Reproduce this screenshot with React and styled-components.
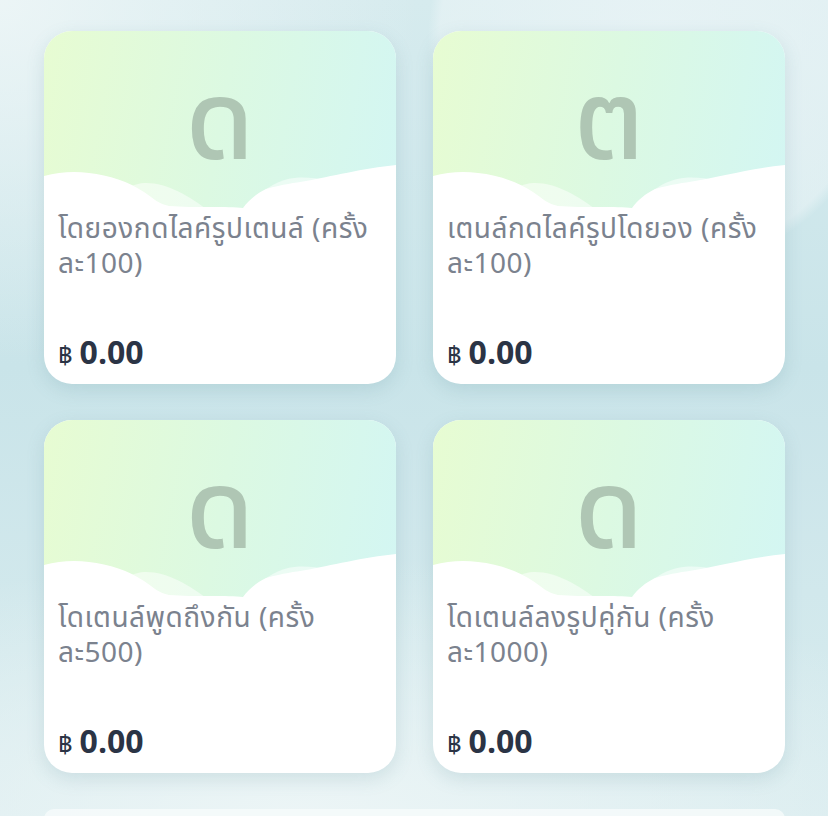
import React from "react";
import styled, { createGlobalStyle } from "styled-components";

const GlobalStyle = createGlobalStyle`
  html, body {
    margin: 0;
    padding: 0;
    height: 816px;
    overflow: hidden;
  }
  body {
    font-family: "Noto Sans Thai", "Noto Sans", "DejaVu Sans", sans-serif;
    background: #d3e9ed;
  }
`;

const items = [
  { letter: "ด", title: "โดยองกดไลค์รูปเตนล์ (ครั้ง\nละ100)", price: "0.00" },
  { letter: "ต", title: "เตนล์กดไลค์รูปโดยอง (ครั้ง\nละ100)", price: "0.00" },
  { letter: "ด", title: "โดเตนล์พูดถึงกัน (ครั้ง\nละ500)", price: "0.00" },
  { letter: "ด", title: "โดเตนล์ลงรูปคู่กัน (ครั้ง\nละ1000)", price: "0.00" },
];

const Page = styled.div`
  width: 828px;
  height: 816px;
  overflow: hidden;
  box-sizing: border-box;
  padding: 31px 43px 0 44px;
  background:
    radial-gradient(circle at 660px 40px, rgba(236, 245, 247, 0.75) 0, rgba(236, 245, 247, 0.55) 220px, rgba(236, 245, 247, 0) 232px),
    radial-gradient(ellipse 420px 360px at 0 0, rgba(238, 246, 247, 0.9), rgba(238, 246, 247, 0)),
    radial-gradient(ellipse 700px 260px at 300px 816px, rgba(236, 245, 246, 1), rgba(236, 245, 246, 0)),
    linear-gradient(180deg, #d6ebee 0%, #c9e4e9 45%, #d9ecef 100%);
`;

const Grid = styled.div`
  display: grid;
  grid-template-columns: 352px 352px;
  column-gap: 37px;
  row-gap: 36px;
`;

const Card = styled.div`
  height: 353px;
  border-radius: 28px;
  background: #ffffff;
  overflow: hidden;
  display: flex;
  flex-direction: column;
  box-shadow: 0 6px 18px rgba(90, 140, 150, 0.18);
`;

const Cover = styled.div`
  position: relative;
  height: 185px;
  flex: none;
  display: flex;
  justify-content: center;
  background: linear-gradient(100deg, #e7fcd2 0%, #dcf9e2 50%, #d3f6f3 100%);
`;

const Letter = styled.div`
  margin-top: 39px;
  font-size: 110px;
  line-height: 112px;
  font-weight: 500;
  color: #afc6b4;
`;

const Cloud = styled.svg`
  position: absolute;
  left: 0;
  bottom: 0;
  width: 352px;
  height: 60px;
`;

const Body = styled.div`
  position: relative;
  flex: 1;
  display: flex;
  flex-direction: column;
  justify-content: space-between;
  padding: 0 12px 6px 14px;
`;

const Title = styled.div`
  margin-top: -4px;
  font-size: 28px;
  line-height: 35px;
  letter-spacing: 0.5px;
  color: #7b828e;
  white-space: pre-line;
`;

const Price = styled.div`
  display: flex;
  align-items: baseline;
  gap: 7px;
  color: #2b3445;
`;

const Baht = styled.span`
  font-size: 25px;
`;

const Amount = styled.span`
  font-size: 32px;
  font-weight: 700;
`;

const Wide = styled.div`
  grid-column: 1 / 3;
  height: 10px;
  border-radius: 28px 28px 0 0;
  background: rgba(246, 250, 250, 0.85);
`;

const CloudShape = () => (
  <Cloud viewBox="0 0 352 60" preserveAspectRatio="none">
    <path
      d="M55 60 C68 40 84 28 100 27 C122 26 145 40 165 55 L165 60 Z"
      fill="#ffffff"
      opacity="0.5"
    />
    <path
      d="M200 60 C212 36 232 24 250 22 C270 20 288 25 305 32 L305 60 Z"
      fill="#ffffff"
      opacity="0.5"
    />
    <path
      d="M0 60 L0 20 C15 16 30 15 45 17 C65 19 85 26 100 36 C110 43 115 48 125 50 C150 52 185 50 199 52 C205 44 212 38 222 33 C240 28 250 27 262 25 C285 21 320 12 352 9 L352 60 Z"
      fill="#ffffff"
    />
  </Cloud>
);

export default function App() {
  return (
    <>
      <GlobalStyle />
      <Page>
        <Grid>
          {items.map((item, i) => (
            <Card key={i}>
              <Cover>
                <Letter>{item.letter}</Letter>
                <CloudShape />
              </Cover>
              <Body>
                <Title>{item.title}</Title>
                <Price>
                  <Baht>฿</Baht>
                  <Amount>{item.price}</Amount>
                </Price>
              </Body>
            </Card>
          ))}
          <Wide />
        </Grid>
      </Page>
    </>
  );
}
